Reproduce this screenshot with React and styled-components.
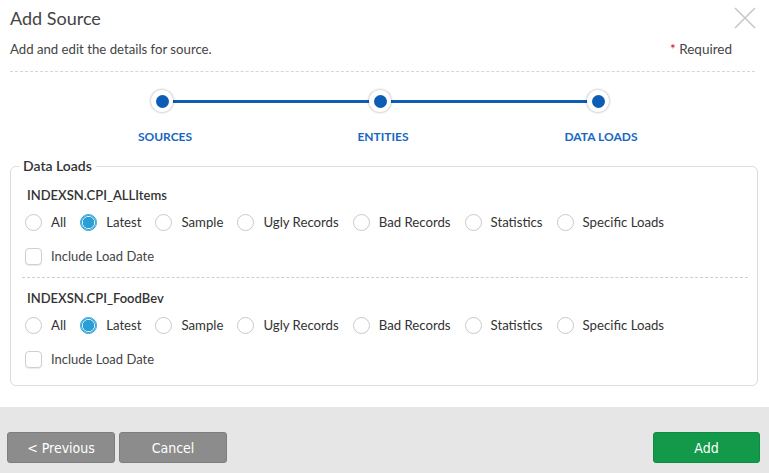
import React, { useState } from 'react'
import styled, { createGlobalStyle } from 'styled-components'

const GlobalStyle = createGlobalStyle`
  html, body {
    margin: 0;
    padding: 0;
    background: #fff;
  }
  body {
    font-family: "Lato", "Open Sans", sans-serif;
    color: #333;
  }
  * { box-sizing: border-box; }
`

const steps = ['SOURCES', 'ENTITIES', 'DATA LOADS']
const options = ['All', 'Latest', 'Sample', 'Ugly Records', 'Bad Records', 'Statistics', 'Specific Loads']
const sources = ['INDEXSN.CPI_ALLItems', 'INDEXSN.CPI_FoodBev']

const CloseIcon = () => (
  <svg width="24" height="24" viewBox="0 0 24 24" fill="none">
    <path d="M2 2 L22 22 M22 2 L2 22" stroke="#c8c8c8" strokeWidth="1.6" />
  </svg>
)

const SourceBlock = ({ name, last }) => {
  const [choice, setChoice] = useState('Latest')
  const [withDate, setWithDate] = useState(false)

  return (
    <StSource $last={last}>
      <StSourceName>{name}</StSourceName>
      <StOptions>
        {options.map((opt) => (
          <StOption key={opt} onClick={() => setChoice(opt)}>
            <StRadio $checked={choice === opt} />
            {opt}
          </StOption>
        ))}
      </StOptions>
      <StCheckRow onClick={() => setWithDate(!withDate)}>
        <StCheckbox $checked={withDate} />
        Include Load Date
      </StCheckRow>
    </StSource>
  )
}

const App = () => {
  return (
    <StPage>
      <GlobalStyle />
      <StBody>
        <StHeader>
          <StTitle>Add Source</StTitle>
          <StClose aria-label="close"><CloseIcon /></StClose>
        </StHeader>
        <StSubHeader>
          <span>Add and edit the details for source.</span>
          <StRequired><em>*</em> Required</StRequired>
        </StSubHeader>

        <StStepper>
          {steps.map((s, i) => (
            <StStep key={s} $last={i === steps.length - 1}>
              <StDot />
              <StStepLabel>{s}</StStepLabel>
            </StStep>
          ))}
        </StStepper>

        <StFieldset>
          <StLegend>Data Loads</StLegend>
          {sources.map((name, i) => (
            <SourceBlock key={name} name={name} last={i === sources.length - 1} />
          ))}
        </StFieldset>
      </StBody>

      <StFooter>
        <StButton>&lt; Previous</StButton>
        <StButton>Cancel</StButton>
        <StSpacer />
        <StButton $primary>Add</StButton>
      </StFooter>
    </StPage>
  )
}

export default App

const StPage = styled.div`
  width: 769px;
  height: 473px;
  display: flex;
  flex-direction: column;
  overflow: hidden;
`

const StBody = styled.div`
  flex: 1;
  display: flex;
  flex-direction: column;
`

const StHeader = styled.div`
  display: flex;
  align-items: center;
  justify-content: space-between;
  height: 34px;
  padding: 0 12px 0 10px;
`

const StTitle = styled.h1`
  margin: 0;
  font-size: 18px;
  font-weight: 400;
  color: #444;
  padding-top: 1px;
`

const StClose = styled.button`
  border: none;
  background: none;
  padding: 0;
  margin-top: 1px;
  width: 24px;
  height: 24px;
  cursor: pointer;
`

const StSubHeader = styled.div`
  display: flex;
  justify-content: space-between;
  align-items: center;
  height: 28px;
  margin: 0 14px 0 10px;
  font-size: 13.2px;
  color: #444;
  padding-top: 1px;
`

const StRequired = styled.span`
  margin-right: 23px;
  font-size: 13.5px;
  em {
    font-style: normal;
    color: #d0021b;
  }
`

const StStepper = styled.div`
  display: grid;
  grid-template-columns: repeat(3, 218px);
  margin: 9px 14px 0 10px;
  padding-top: 18px;
  padding-left: 43px;
  border-top: 1px dashed #d6d6d6;
  height: 85px;
`

const StStep = styled.div`
  position: relative;
  display: flex;
  flex-direction: column;
  align-items: center;
  &::after {
    content: '';
    display: ${(p) => (p.$last ? 'none' : 'block')};
    position: absolute;
    top: 10px;
    left: 50%;
    width: 218px;
    height: 3px;
    background: #0d5cb6;
  }
`

const StDot = styled.span`
  position: relative;
  z-index: 1;
  width: 22px;
  height: 22px;
  border-radius: 50%;
  background: #fff;
  box-shadow: 0 0 2px 1px rgba(0, 0, 0, 0.18);
  display: flex;
  align-items: center;
  justify-content: center;
  &::before {
    content: '';
    width: 13px;
    height: 13px;
    border-radius: 50%;
    background: #0d5cb6;
  }
`

const StStepLabel = styled.span`
  margin-top: 17px;
  margin-left: 6px;
  font-size: 12px;
  font-weight: 700;
  color: #1766c2;
`

const StFieldset = styled.fieldset`
  margin: 0 11px 0 10px;
  padding: 9px 12px 17px 14px;
  border: 1px solid #dcdcdc;
  border-radius: 6px;
`

const StLegend = styled.legend`
  padding: 0 4px;
  margin-left: -6px;
  font-size: 14px;
  font-weight: 600;
  color: #333;
  line-height: 20px;
`

const StSource = styled.div`
  ${(p) => !p.$last && `
    border-bottom: 1px dashed #cfcfcf;
    margin: 0 -3px 10px;
    padding: 0 3px 12px;
  `}
`

const StSourceName = styled.div`
  font-size: 13px;
  font-weight: 600;
  color: #333;
  line-height: 20px;
  padding-left: 2px;
`

const StOptions = styled.div`
  display: flex;
  align-items: center;
  margin-top: 7px;
  height: 20px;
`

const StOption = styled.label`
  display: flex;
  align-items: center;
  gap: 9px;
  margin-right: 14px;
  font-size: 13.2px;
  color: #333;
  cursor: pointer;
`

const StRadio = styled.span`
  width: 17px;
  height: 17px;
  border-radius: 50%;
  border: 1px solid ${(p) => (p.$checked ? '#2a9fd6' : '#c9c9c9')};
  background: ${(p) => (p.$checked ? 'radial-gradient(circle, #2a9fd6 0 5.5px, #fff 6px)' : '#fff')};
  box-shadow: ${(p) => (p.$checked ? 'inset 0 0 0 1px #2a9fd6' : 'none')};
`

const StCheckRow = styled.label`
  display: flex;
  align-items: center;
  gap: 9px;
  margin-top: 15px;
  height: 18px;
  font-size: 13px;
  color: #444;
  cursor: pointer;
`

const StCheckbox = styled.span`
  width: 17px;
  height: 17px;
  border-radius: 4px;
  border: 1px solid #cfcfcf;
  background: ${(p) => (p.$checked ? '#2a9fd6' : '#fff')};
  box-shadow: 0 1px 1px rgba(0, 0, 0, 0.08);
`

const StFooter = styled.div`
  height: 66px;
  background: #e6e6e6;
  display: flex;
  align-items: flex-start;
  gap: 4px;
  padding: 25px 9px 0 7px;
`

const StSpacer = styled.div`
  flex: 1;
`

const StButton = styled.button`
  width: ${(p) => (p.$primary ? '107px' : '108px')};
  height: 31px;
  border-radius: 3px;
  border: 1px solid ${(p) => (p.$primary ? '#0f8a41' : '#7e7e7e')};
  background: ${(p) => (p.$primary ? '#12994a' : '#8c8c8c')};
  color: #fff;
  font-family: "Liberation Sans Narrow", "DejaVu Sans Condensed", "Roboto", sans-serif;
  font-size: 14px;
  cursor: pointer;
`
